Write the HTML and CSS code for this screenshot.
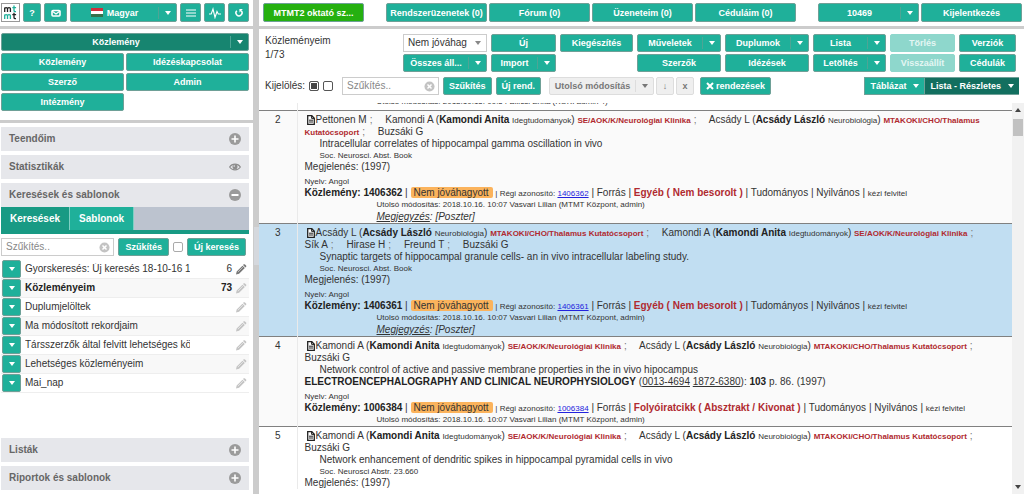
FILE: index.html
```html
<!DOCTYPE html>
<html lang="hu">
<head>
<meta charset="utf-8">
<title>MTMT2</title>
<link rel="stylesheet" href="styles.css">
</head>
<body>
<svg class="defs" aria-hidden="true">
  <symbol id="caret" viewBox="0 0 6 4"><path d="M0 0h6L3 4z" fill="currentColor"/></symbol>
  <symbol id="clear" viewBox="0 0 12 12"><circle cx="6" cy="6" r="5.5" fill="#c3c3c3"/><path d="M3.8 3.8l4.4 4.4M8.2 3.8L3.8 8.2" stroke="#fff" stroke-width="1.6"/></symbol>
  <symbol id="plus" viewBox="0 0 12 12"><circle cx="6" cy="6" r="6" fill="#9b9b9b"/><path d="M6 2.5v7M2.5 6h7" stroke="#fff" stroke-width="1.6"/></symbol>
  <symbol id="minus" viewBox="0 0 12 12"><circle cx="6" cy="6" r="6" fill="#9b9b9b"/><path d="M2.5 6h7" stroke="#fff" stroke-width="2"/></symbol>
  <symbol id="eye" viewBox="0 0 12 8"><path d="M.6 4C3 .2 9 .2 11.4 4 9 7.8 3 7.8.6 4z" fill="#e6e7eb" stroke="#8d8d8d" stroke-width="1.1"/><circle cx="6" cy="3.8" r="2.5" fill="#8d8d8d"/><circle cx="5.2" cy="3" r=".8" fill="#e6e7eb"/></symbol>
  <symbol id="pencil" viewBox="0 0 12 12"><path d="M.5 11.5l.8-3.4L7.6 1.8l2.6 2.6-6.3 6.3zM8.2 1.2l.8-.8q.7-.5 1.4.1l1.1 1.1q.6.7.1 1.4l-.8.8z" fill="currentColor"/><path d="M2.6 8.8L8 3.4" stroke="#fff" stroke-width=".6"/></symbol>
  <symbol id="doc" viewBox="0 0 8 10"><path d="M.7.7h4.1l2.5 2.5v6.1H.7z" fill="#fff" stroke="#222" stroke-width="1.3"/><path d="M4.6.7v2.7h2.7M2 5.2h4M2 7h4" fill="none" stroke="#222" stroke-width="1"/></symbol>
</svg>
<div class="app">
  <aside class="side">
    <header class="bar side-bar">
      <svg class="logo" viewBox="0 0 19 19" role="img" aria-label="mtmt"><rect x=".5" y=".5" width="18" height="18" fill="#fff" stroke="#999"/><g fill="none" stroke-width="1.3"><path d="M3.7 9V4.4M3.7 6q0-1.3 1.4-1.3T6.5 6v3M6.5 6q0-1.3 1.5-1.3T9.4 6v3" stroke="#222"/><path d="M13 2.5v5q0 1.3 2 1.1M11.3 4.7h3.8" stroke="#1fb09a"/><path d="M3.7 16v-4.6M3.7 13q0-1.3 1.4-1.3T6.5 13v3M6.5 13q0-1.3 1.5-1.3T9.4 13v3" stroke="#1fb09a"/><path d="M13 9.8v4.7q0 1.3 2 1.1M11.3 11.7h3.8" stroke="#222"/></g></svg>
      <button class="btn icon">?</button>
      <button class="btn icon wide" aria-label="Üzenetek"><svg width="10" height="8" viewBox="0 0 10 8"><rect x="1" y="1.5" width="8" height="5.5" rx="1" fill="none" stroke="#fff" stroke-width="1.6"/><path d="M1 2l4 3 4-3" fill="none" stroke="#fff" stroke-width="1.3"/></svg></button>
      <button class="btn split grow"><span class="label"><svg class="flag" width="12" height="9" viewBox="0 0 12 9"><path fill="#d02f3c" d="M0 0h12v3H0z"/><path fill="#fff" d="M0 3h12v3H0z"/><path fill="#36704c" d="M0 6h12v3H0z"/></svg>Magyar</span><span class="arrow"><svg class="caret"><use href="#caret"/></svg></span></button>
      <button class="btn icon mid" aria-label="Menü"><svg width="10" height="8" viewBox="0 0 10 8"><path d="M0 1h10M0 4h10M0 7h10" stroke="#fff"/></svg></button>
      <button class="btn icon mid" aria-label="Aktivitás"><svg width="12" height="12" viewBox="0 0 12 12"><path d="M0 7h2.2L4 2l2 8.5L8 4.5 9.3 7H12" fill="none" stroke="#fff" stroke-width="1.1"/></svg></button>
      <button class="btn icon mid" aria-label="Frissítés"><svg width="8" height="8" viewBox="0 0 8 8"><path d="M1.9 1.7A3 3 0 1 0 6.2 1.8" fill="none" stroke="#fff" stroke-width="1.5"/><path d="M4.3 0h3.5L4.6 3.6z" fill="#fff"/></svg></button>
    </header>
    <nav class="types">
      <button class="btn split dark full"><span class="label">Közlemény</span><span class="arrow"><svg class="caret"><use href="#caret"/></svg></span></button>
      <button class="btn">Közlemény</button>
      <button class="btn">Idézéskapcsolat</button>
      <button class="btn">Szerző</button>
      <button class="btn">Admin</button>
      <button class="btn">Intézmény</button>
    </nav>
    <div class="panels">
      <button class="panel">Teendőim<svg class="ico12"><use href="#plus"/></svg></button>
      <button class="panel">Statisztikák<svg class="eye"><use href="#eye"/></svg></button>
      <section>
        <button class="panel">Keresések és sablonok<svg class="ico12"><use href="#minus"/></svg></button>
        <div class="tabs"><button class="tab on">Keresések</button><button class="tab">Sablonok</button></div>
        <div class="search">
          <span class="field"><input type="text" placeholder="Szűkítés.." aria-label="Szűkítés"><svg class="clear"><use href="#clear"/></svg></span>
          <button class="btn">Szűkítés</button>
          <input class="tick" type="checkbox" aria-label="Kijelölés">
          <button class="btn">Új keresés</button>
        </div>
        <ul class="saved">
          <li><button class="btn drop" aria-label="Menü"><svg class="caret"><use href="#caret"/></svg></button><span class="name">Gyorskeresés: Új keresés 18-10-16 10:07</span><span class="count">6</span><svg class="pencil active"><use href="#pencil"/></svg></li>
          <li class="bold"><button class="btn drop" aria-label="Menü"><svg class="caret"><use href="#caret"/></svg></button><span class="name">Közleményeim</span><span class="count">73</span><svg class="pencil"><use href="#pencil"/></svg></li>
          <li><button class="btn drop" aria-label="Menü"><svg class="caret"><use href="#caret"/></svg></button><span class="name">Duplumjelöltek</span><span class="count"></span><svg class="pencil"><use href="#pencil"/></svg></li>
          <li><button class="btn drop" aria-label="Menü"><svg class="caret"><use href="#caret"/></svg></button><span class="name">Ma módosított rekordjaim</span><span class="count"></span><svg class="pencil"><use href="#pencil"/></svg></li>
          <li><button class="btn drop" aria-label="Menü"><svg class="caret"><use href="#caret"/></svg></button><span class="name">Társszerzők által felvitt lehetséges közlemények</span><span class="count"></span><svg class="pencil"><use href="#pencil"/></svg></li>
          <li><button class="btn drop" aria-label="Menü"><svg class="caret"><use href="#caret"/></svg></button><span class="name">Lehetséges közleményeim</span><span class="count"></span><svg class="pencil"><use href="#pencil"/></svg></li>
          <li><button class="btn drop" aria-label="Menü"><svg class="caret"><use href="#caret"/></svg></button><span class="name">Mai_nap</span><span class="count"></span><svg class="pencil"><use href="#pencil"/></svg></li>
        </ul>
      </section>
      <button class="panel push">Listák<svg class="ico12"><use href="#plus"/></svg></button>
      <button class="panel">Riportok és sablonok<svg class="ico12"><use href="#plus"/></svg></button>
    </div>
  </aside>
  <div class="splitter"><span class="handle"></span></div>
  <main class="main">
    <header class="bar main-bar">
      <button class="btn grow bright after">MTMT2 oktató sz...</button>
      <button class="btn grow">Rendszerüzenetek (0)</button>
      <button class="btn grow">Fórum (0)</button>
      <button class="btn grow">Üzeneteim (0)</button>
      <button class="btn grow after">Céduláim (0)</button>
      <button class="btn split grow"><span class="label">10469</span><span class="arrow"><svg class="caret"><use href="#caret"/></svg></span></button>
      <button class="btn grow">Kijelentkezés</button>
    </header>
    <div class="tools">
      <div class="where">Közleményeim<br>1/73</div>
      <span class="pick"><select aria-label="Állapot"><option>Nem jóváhagyott</option></select><svg class="caret"><use href="#caret"/></svg></span>
      <button class="btn">Új</button>
      <button class="btn">Kiegészítés</button>
      <button class="btn split"><span class="label">Műveletek</span><span class="arrow"><svg class="caret"><use href="#caret"/></svg></span></button>
      <button class="btn split"><span class="label">Duplumok</span><span class="arrow"><svg class="caret"><use href="#caret"/></svg></span></button>
      <button class="btn split"><span class="label">Lista</span><span class="arrow"><svg class="caret"><use href="#caret"/></svg></span></button>
      <button class="btn" disabled>Törlés</button>
      <button class="btn">Verziók</button>
      <button class="btn split"><span class="label">Összes áll...</span><span class="arrow"><svg class="caret"><use href="#caret"/></svg></span></button>
      <button class="btn split"><span class="label">Import</span><span class="arrow"><svg class="caret"><use href="#caret"/></svg></span></button>
      <button class="btn authors">Szerzők</button>
      <button class="btn">Idézések</button>
      <button class="btn split"><span class="label">Letöltés</span><span class="arrow"><svg class="caret"><use href="#caret"/></svg></span></button>
      <button class="btn" disabled>Visszaállít</button>
      <button class="btn">Cédulák</button>
    </div>
    <div class="sorting">
      <span class="mark">Kijelölés:</span>
      <input class="tick full-box" type="checkbox" aria-label="Mind kijelölése" checked>
      <input class="tick line-box" type="checkbox" aria-label="Kijelölés törlése">
      <span class="field"><input type="text" placeholder="Szűkítés.." aria-label="Lista szűkítése"><svg class="clear"><use href="#clear"/></svg></span>
      <button class="btn">Szűkítés</button>
      <button class="btn">Új rend.</button>
      <div class="order">
        <button class="btn plain split"><span class="label">Utolsó módosítás</span><span class="arrow"><svg class="caret"><use href="#caret"/></svg></span></button>
        <button class="btn plain square">↓</button>
        <button class="btn plain square">x</button>
      </div>
      <button class="btn reset"><svg class="cross" width="8" height="8" viewBox="0 0 8 8"><path d="M1 1l6 6M7 1L1 7" stroke="#fff" stroke-width="2"/></svg>rendezések</button>
      <div class="view"><button class="btn">Táblázat<svg class="caret"><use href="#caret"/></svg></button><button class="btn deep">Lista - Részletes<svg class="caret"><use href="#caret"/></svg></button></div>
    </div>
    <div class="results">
      <div class="clip">
        <table class="records">
          <tr class="first"><td class="num"></td><td><p class="small far">Utolsó módosítás: 2018.10.15. 09:54 Bilicsi Erika (KOKI admin 4)</p></td></tr>
          <tr class="alt">
            <td class="num">2</td>
            <td>
              <p><svg class="doc"><use href="#doc"/></svg><span class="author">Pettonen M<i>;</i></span> Kamondi A (<b>Kamondi Anita</b> <small>Idegtudományok</small>) <strong class="inst">SE/AOK/K/Neurológiai Klinika</strong><i>;</i> Acsády L (<b>Acsády László</b> <small>Neurobiológia</small>) <strong class="inst">MTAKOKI/CHO/Thalamus Kutatócsoport</strong><i>;</i> <span class="author">Buzsáki G</span></p>
              <p class="near">Intracellular correlates of hippocampal gamma oscillation in vivo</p>
              <p class="small near source">Soc. Neurosci. Abst. Book</p>
              <p>Megjelenés: (1997)</p>
              <p class="small lang">Nyelv: Angol</p>
              <p><b>Közlemény: 1406362</b> | <mark>Nem jóváhagyott</mark> <small>| Régi azonosító: <a href="#1406362">1406362</a></small> | Forrás | <strong class="kind">Egyéb ( Nem besorolt )</strong> | Tudományos | Nyilvános | <small>kézi felvitel</small></p>
              <p class="small far">Utolsó módosítás: 2018.10.16. 10:07 Vasvari Lilian (MTMT Központ, admin)</p>
              <p class="far"><em><u>Megjegyzés</u>: [Poszter]</em></p>
            </td>
          </tr>
          <tr class="selected">
            <td class="num">3</td>
            <td>
              <p><svg class="doc"><use href="#doc"/></svg>Acsády L (<b>Acsády László</b> <small>Neurobiológia</small>) <strong class="inst">MTAKOKI/CHO/Thalamus Kutatócsoport</strong><i>;</i> Kamondi A (<b>Kamondi Anita</b> <small>Idegtudományok</small>) <strong class="inst">SE/AOK/K/Neurológiai Klinika</strong><i>;</i> <span class="author">Sík A<i>;</i></span> <span class="author">Hirase H<i>;</i></span> <span class="author">Freund T<i>;</i></span> <span class="author">Buzsáki G</span></p>
              <p class="near">Synaptic targets of hippocampal granule cells- an in vivo intracellular labeling study.</p>
              <p class="small near source">Soc. Neurosci. Abst. Book</p>
              <p>Megjelenés: (1997)</p>
              <p class="small lang">Nyelv: Angol</p>
              <p><b>Közlemény: 1406361</b> | <mark>Nem jóváhagyott</mark> <small>| Régi azonosító: <a href="#1406361">1406361</a></small> | Forrás | <strong class="kind">Egyéb ( Nem besorolt )</strong> | Tudományos | Nyilvános | <small>kézi felvitel</small></p>
              <p class="small far">Utolsó módosítás: 2018.10.16. 10:07 Vasvari Lilian (MTMT Központ, admin)</p>
              <p class="far"><em><u>Megjegyzés</u>: [Poszter]</em></p>
            </td>
          </tr>
          <tr class="alt">
            <td class="num">4</td>
            <td>
              <p><svg class="doc"><use href="#doc"/></svg>Kamondi A (<b>Kamondi Anita</b> <small>Idegtudományok</small>) <strong class="inst">SE/AOK/K/Neurológiai Klinika</strong><i>;</i> Acsády L (<b>Acsády László</b> <small>Neurobiológia</small>) <strong class="inst">MTAKOKI/CHO/Thalamus Kutatócsoport</strong><i>;</i> <span class="author">Buzsáki G</span></p>
              <p class="near">Network control of active and passive membrane properties in the in vivo hipocampus</p>
              <p><b>ELECTROENCEPHALOGRAPHY AND CLINICAL NEUROPHYSIOLOGY</b> (<u>0013-4694</u> <u>1872-6380</u>): <b>103</b> p. 86. (1997)</p>
              <p class="small lang">Nyelv: Angol</p>
              <p><b>Közlemény: 1006384</b> | <mark>Nem jóváhagyott</mark> <small>| Régi azonosító: <a href="#1006384">1006384</a></small> | Forrás | <strong class="kind">Folyóiratcikk ( Absztrakt / Kivonat )</strong> | Tudományos | Nyilvános | <small>kézi felvitel</small></p>
              <p class="small far">Utolsó módosítás: 2018.10.16. 10:07 Vasvari Lilian (MTMT Központ, admin)</p>
            </td>
          </tr>
          <tr>
            <td class="num">5</td>
            <td>
              <p><svg class="doc"><use href="#doc"/></svg>Kamondi A (<b>Kamondi Anita</b> <small>Idegtudományok</small>) <strong class="inst">SE/AOK/K/Neurológiai Klinika</strong><i>;</i> Acsády L (<b>Acsády László</b> <small>Neurobiológia</small>) <strong class="inst">MTAKOKI/CHO/Thalamus Kutatócsoport</strong><i>;</i> <span class="author">Buzsáki G</span></p>
              <p class="near">Network enhancement of dendritic spikes in hippocampal pyramidal cells in vivo</p>
              <p class="small near source">Soc. Neurosci Abstr. 23.660</p>
              <p>Megjelenés: (1997)</p>
            </td>
          </tr>
        </table>
      </div>
      <div class="scroll"><svg class="caret up"><use href="#caret"/></svg><span class="thumb"></span><svg class="caret last"><use href="#caret"/></svg></div>
    </div>
  </main>
</div>
</body>
</html>
```
FILE: styles.css
```css
* { box-sizing: border-box; }
body { margin: 0; font: 10px/12px "Liberation Sans", Arial, sans-serif; color: #333; background: #fff; }
p, ul { margin: 0; padding: 0; }
svg { flex: none; }
.defs { display: none; }
.app { display: flex; height: 100vh; overflow: hidden; }

.side { width: 253px; flex: none; display: flex; flex-direction: column; }
.splitter { width: 6px; flex: none; background: #ccc; display: flex; flex-direction: column; align-items: flex-end; padding-top: 227px; }
.handle { width: 5px; height: 38px; background: #d5d8dd; }
.main { flex: 1; min-width: 0; display: flex; flex-direction: column; }

.bar { display: flex; height: 29px; padding-top: 3px; border-bottom: 3px solid #ccc; flex: none; align-items: flex-start; }
.side-bar { gap: 3px; padding-left: 1px; padding-right: 4px; }
.main-bar { gap: 2px; padding-left: 4px; padding-right: 2px; }

.btn { height: 18px; padding: 0 6px; border: 1px solid #6ea097; border-radius: 2px; background: #1fb09a; color: #fff; font: bold 9px/16px "Liberation Sans", Arial, sans-serif; display: flex; align-items: center; justify-content: center; white-space: nowrap; }
.btn:disabled { background: #8ed7cc; border-color: #8ed7cc; color: #e4f6f3; }
.grow { flex: 1; min-width: 0; padding: 0; }
.after { margin-right: 20px; }
.split { padding: 0; }
.label { flex: 1; display: flex; align-items: center; justify-content: center; }
.arrow { width: 18px; height: 12px; border-left: 1px solid #4da595; display: flex; align-items: center; justify-content: center; }
.caret { width: 6px; height: 4px; }
.flag { margin-right: 4px; }
.icon { width: 18px; padding: 0; }
.icon.mid { width: 21px; }
.icon.wide { width: 23px; }
.logo { width: 19px; height: 19px; }
.dark { background: #178570; }
.deep { background: #126f5f; }
.bright { background: #25b010; }
.side-bar .btn, .main-bar .btn { height: 19px; }

.types { display: grid; grid-template-columns: 1fr 1fr; gap: 2px; padding: 4px 4px 9px 1px; border-bottom: 3px solid #ccc; flex: none; }
.full { grid-column: 1 / -1; }
.panels { flex: 1; display: flex; flex-direction: column; gap: 4px; padding: 4px 4px 4px 1px; }
.panel { width: 100%; height: 24px; flex: none; border: 0; padding: 0 8px; background: #e6e7eb; color: #666; font: bold 10px/24px "Liberation Sans", Arial, sans-serif; display: flex; align-items: center; justify-content: space-between; text-align: left; }
.push { margin-top: auto; }
.ico12 { width: 12px; height: 12px; }
.eye { width: 12px; height: 8px; }
.tabs { display: flex; background: #bcc3cf; border-bottom: 4px solid #189a84; height: 27px; }
.tab { height: 23px; border: 0; border-right: 1px solid #7fd0c4; padding: 0 9px; background: #1fb09a; color: #fff; font: bold 10px/23px "Liberation Sans", Arial, sans-serif; }
.tab.on { background: #189a84; }
.search { display: flex; align-items: center; gap: 4px; padding: 4px 3px 4px 0; }
.field { display: flex; align-items: center; height: 18px; flex: 1; min-width: 0; border: 1px solid #ccc; padding: 0 3px 0 4px; background: #fff; }
.field input { flex: 1; width: 0; border: 0; padding: 0; outline: 0; background: none; font: 10px/16px "Liberation Sans", Arial, sans-serif; }
.field input::placeholder { color: #888; }
.clear { width: 11px; height: 11px; }
.tick { appearance: none; width: 10px; height: 10px; margin: 0; flex: none; border: 1px solid #aaa; border-radius: 2px; background: #fff; }
.line-box { border-color: #555; }
.full-box { border-color: #555; background: #444; box-shadow: inset 0 0 0 1px #fff; }

.saved { list-style: none; }
.saved li { display: flex; align-items: center; height: 19px; padding: 0 2px 0 1px; border-bottom: 1px solid #eee; }
.saved li:nth-child(even) { background: #f8f8f8; }
.drop { width: 19px; padding: 0; margin-right: 4px; flex: none; }
.name { width: 165px; overflow: hidden; white-space: nowrap; }
.count { flex: 1; text-align: right; }
.pencil { width: 12px; height: 11px; margin-left: 3px; color: #c4c4c4; }
.pencil.active { color: #777; }
.bold { font-weight: bold; color: #222; }

.tools { display: grid; grid-template-columns: 1fr 84px 65px 73px 84px 84px 73px 65px 57px; gap: 2px 4px; padding: 5px 8px 0 6px; flex: none; }
.where { grid-row: 1 / 3; line-height: 14px; }
.authors { grid-column: 5; }
.pick { display: flex; align-items: center; height: 18px; border: 1px solid #ccc; padding: 0 5px 0 4px; background: #fff; color: #888; }
.pick select { appearance: none; width: 0; flex: 1; border: 0; padding: 0; margin-right: 8px; background: none; color: #333; overflow: hidden; text-overflow: clip; font: 10px/16px "Liberation Sans", Arial, sans-serif; }

.sorting { display: flex; align-items: center; gap: 4px; padding: 5px 5px 8px 6px; flex: none; }
.sorting .btn { padding: 0 5px; }
.sorting .field { flex: none; width: 97px; margin-left: 5px; }
.order { display: flex; gap: 2px; margin: 0 2px 0 4px; }
.sorting .plain { padding: 0; background: #efefef; border-color: #ddd; color: #777; }
.plain.split { width: 105px; }
.plain .arrow { border-color: #ddd; }
.plain.square { width: 18px; }
.cross { margin-right: 2px; }
.view { display: flex; margin-left: auto; }
.view .caret { margin-left: 7px; }
.view .btn { border-radius: 0; border-right: 0; }

.results { flex: 1; min-height: 0; display: flex; }
.clip { flex: 1; min-width: 0; overflow: hidden; }
.records { width: 100%; border-collapse: collapse; margin-top: -8px; }
.records td { padding: 3px 8px 0 7px; border-top: 1px solid #808080; vertical-align: top; }
.records .first td { border-top: 0; padding-top: 1px; padding-bottom: 2px; }
.records .num { width: 38px; padding-left: 0; padding-right: 0; text-align: center; border-right: 1px solid #eaeaea; }
.alt { background: #fafafa; }
.selected { background: #c1def2; }
.records p { line-height: 12px; }
.near { padding-left: 15px; }
.far { padding-left: 72px; }
.small, small, .inst { font-size: 8px; line-height: 8px; }
.records .source { line-height: 11px; }
.records .lang { line-height: 10px; margin-top: 4px; }
.records b { color: #222; }
.inst, .kind { color: #b02a30; }
.author { white-space: nowrap; }
.records i { font-style: normal; color: #777; padding: 0 10px 0 3px; }
.records mark { background: #fbb35c; color: #333; border-radius: 2px; padding: 0 4px 0 3px; }
.records a { color: #22d; }
.doc { width: 8px; height: 10px; vertical-align: -2px; margin: 0 1px 0 2px; }
.scroll { width: 12px; flex: none; background: #f1f1f1; display: flex; flex-direction: column; align-items: center; padding: 5px 0; color: #444; }
.up { transform: rotate(180deg); }
.thumb { width: 10px; height: 17px; background: #c1c1c1; margin-top: 7px; }
.last { margin-top: auto; }
```
